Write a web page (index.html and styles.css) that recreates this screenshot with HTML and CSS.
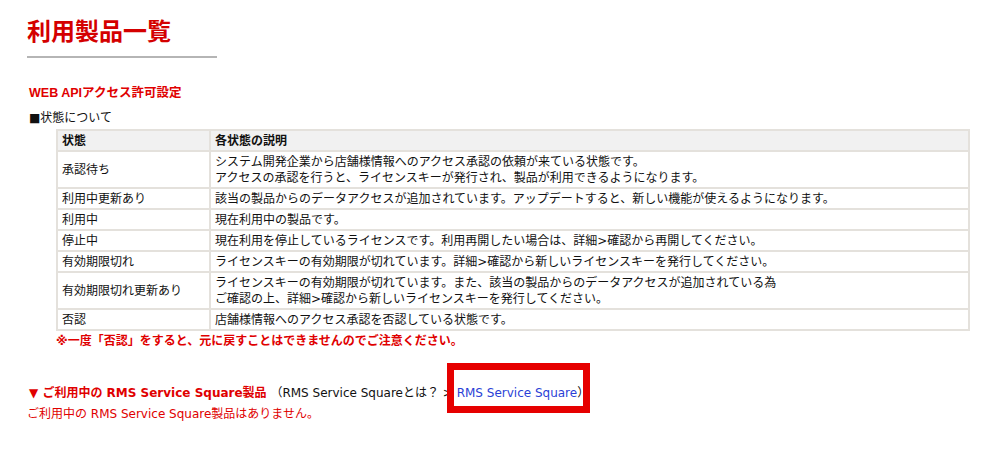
FILE: index.html
```html
<!DOCTYPE html>
<html lang="ja">
<head>
<meta charset="utf-8">
<link rel="stylesheet" href="styles.css">
</head>
<body>
<div class="page">
  <h1 class="title">利用製品一覧</h1>
  <h2 class="section">WEB APIアクセス許可設定</h2>
  <p class="label">■状態について</p>
  <table class="status">
    <tr><th class="c1">状態</th><th>各状態の説明</th></tr>
    <tr><td>承認待ち</td><td>システム開発企業から店舗様情報へのアクセス承認の依頼が来ている状態です。<br>アクセスの承認を行うと、ライセンスキーが発行され、製品が利用できるようになります。</td></tr>
    <tr><td>利用中更新あり</td><td>該当の製品からのデータアクセスが追加されています。アップデートすると、新しい機能が使えるようになります。</td></tr>
    <tr><td>利用中</td><td>現在利用中の製品です。</td></tr>
    <tr><td>停止中</td><td>現在利用を停止しているライセンスです。利用再開したい場合は、詳細&gt;確認から再開してください。</td></tr>
    <tr><td>有効期限切れ</td><td>ライセンスキーの有効期限が切れています。詳細&gt;確認から新しいライセンスキーを発行してください。</td></tr>
    <tr><td>有効期限切れ更新あり</td><td>ライセンスキーの有効期限が切れています。また、該当の製品からのデータアクセスが追加されている為<br>ご確認の上、詳細&gt;確認から新しいライセンスキーを発行してください。</td></tr>
    <tr><td>否認</td><td>店舗様情報へのアクセス承認を否認している状態です。</td></tr>
  </table>
  <p class="warn">※一度「否認」をすると、元に戻すことはできませんのでご注意ください。</p>
  <div class="rss">
    <span class="rss-title">▼ ご利用中の RMS Service Square製品</span>
    <span class="rss-note">（RMS Service Squareとは？ &gt; <span class="hl"><a class="link" href="#">RMS Service Square</a></span>）</span>
  </div>
  <p class="empty">ご利用中の RMS Service Square製品はありません。</p>
</div>
</body>
</html>
```
FILE: styles.css
```css
html, body { margin: 0; padding: 0; background: #fff; }
body {
  font-family: "DejaVu Sans", "Noto Sans CJK JP", sans-serif;
  font-size: 12px;
  color: #111;
}
.page { padding: 14px 0 0 27px; }
.title {
  margin: 0;
  width: 190px;
  font-family: "Noto Sans CJK JP", sans-serif;
  font-size: 24px;
  font-weight: bold;
  color: #d40000;
  line-height: 32px;
  padding-bottom: 10px;
  border-bottom: 2px solid #b5b5b5;
}
.section {
  margin: 27px 0 0 2px;
  font-family: "Liberation Sans", "Noto Sans CJK JP", sans-serif;
  font-size: 12.5px;
  font-weight: bold;
  color: #e00000;
  line-height: 16px;
}
.label {
  margin: 9px 0 0 2px;
  line-height: 16px;
}
.status {
  margin: 3px 0 0 29px;
  width: 914px;
  border-collapse: collapse;
  border: 2px solid #d6d2ca;
}
.status th, .status td {
  border: 2px solid #e4e1dc;
  text-align: left;
  font-weight: normal;
  padding: 2px 6px 1px 4px;
  line-height: 16px;
  vertical-align: middle;
}
.status th {
  background: #f1f1f1;
  font-weight: bold;
}
.status .c1 { width: 141px; }
.warn {
  margin: 2px 0 0 29px;
  color: #e00000;
  font-weight: bold;
  line-height: 16px;
}
.rss {
  margin: 36px 0 0 2px;
  line-height: 16px;
}
.rss-title { color: #e00000; font-weight: bold; }
.rss-note { color: #111; }
.hl { position: relative; }
.hl::before {
  content: "";
  position: absolute;
  left: -10px;
  top: -23px;
  width: 129px;
  height: 36px;
  border: 7px solid #e60000;
}
.link { position: relative; color: #2a3fd6; text-decoration: none; }
.empty {
  margin: 5px 0 0 0;
  color: #e00000;
  line-height: 16px;
}
```
